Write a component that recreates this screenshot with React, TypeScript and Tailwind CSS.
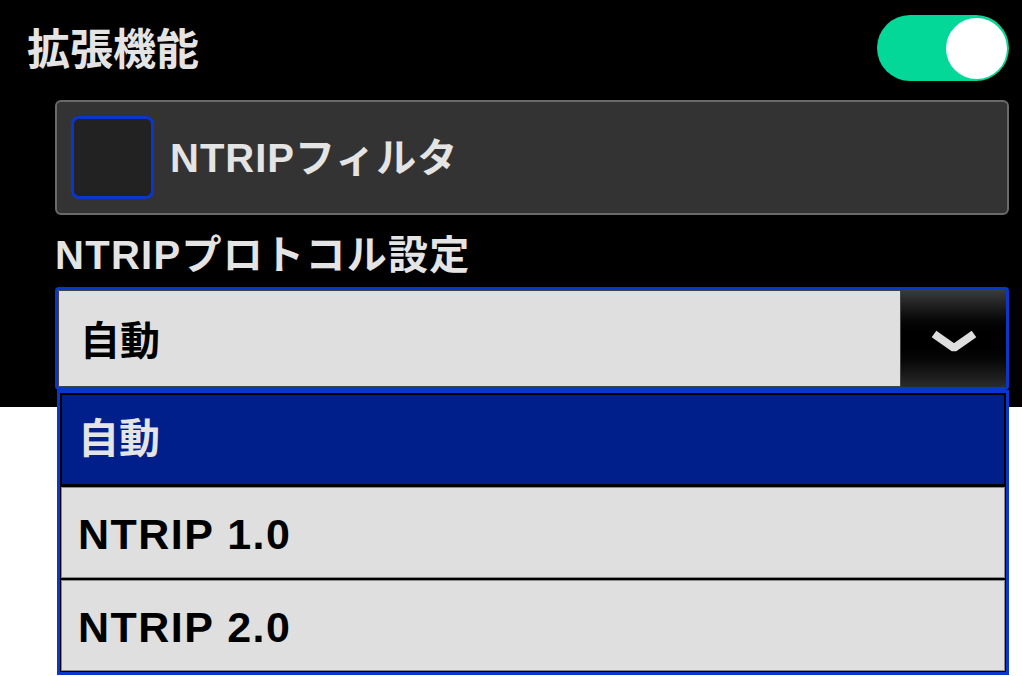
import React, { useState } from "react";

const options = ["自動", "NTRIP 1.0", "NTRIP 2.0"];

const Toggle = ({ on }: { on: boolean }) => (
  <div
    className={`w-[132px] h-[66px] rounded-full flex items-center px-[2px] ${
      on ? "bg-[#03d898] justify-end" : "bg-[#555] justify-start"
    }`}
  >
    <div className="w-[61px] h-[61px] rounded-full bg-white" />
  </div>
);

const Chevron = () => (
  <svg width="48" height="30" viewBox="0 0 48 30">
    <polyline
      points="4,7 24,21 44,7"
      fill="none"
      stroke="#dedede"
      strokeWidth="8"
      strokeLinejoin="bevel"
    />
  </svg>
);

export default function App() {
  const [selected] = useState(0);

  return (
    <div className="relative w-[1022px] h-[676px] bg-white overflow-hidden font-['Liberation_Sans','Noto_Sans_CJK_JP',sans-serif] font-bold">
      <div className="bg-black h-[407px] pl-[27px] pr-[13px] pt-[15px]">
        {/* header */}
        <div className="flex items-center justify-between h-[66px]">
          <span className="text-[43px] leading-none text-[#e4e4e4] mt-[4px]">
            拡張機能
          </span>
          <Toggle on />
        </div>

        <div className="ml-[28px]">
          {/* filter checkbox */}
          <div className="mt-[19px] h-[115px] rounded-[6px] border-2 border-[#6a6a6a] bg-[#333333] flex items-center pl-[14px] gap-[16px]">
            <div className="w-[83px] h-[83px] rounded-[8px] border-[3px] border-[#0a36d0] bg-[#222222]" />
            <span className="text-[40px] tracking-[1px] text-[#e4e4e4]">
              NTRIPフィルタ
            </span>
          </div>

          {/* protocol label */}
          <div className="h-[72px] flex items-center pt-[8px]">
            <span className="text-[40px] tracking-[1.3px] text-[#e4e4e4] leading-none">
              NTRIPプロトコル設定
            </span>
          </div>

          {/* select */}
          <div className="h-[103px] rounded-[4px] border-[3px] border-[#0a36d0] flex overflow-hidden">
            <div className="flex-1 bg-[#dfdfdf] border border-[#444] flex items-center pl-[21px] pt-[4px]">
              <span className="text-[40px] text-black">
                {options[selected]}
              </span>
            </div>
            <div className="w-[105px] bg-linear-to-b from-[#3c3c3c] via-black via-50% to-[#2c2c2c] flex items-center justify-center pt-[6px]">
              <Chevron />
            </div>
          </div>
        </div>
      </div>

      {/* open dropdown list */}
      <ul className="absolute left-[57px] top-[390px] w-[952px] border-[3px] border-[#0a36d0] bg-[#0a36d0]">
        {options.map((opt, i) => (
          <li
            key={opt}
            className={`h-[93px] border border-black flex items-center pl-[17px] ${
              i === selected
                ? "bg-[#001f8a] text-[#e4e4e4] text-[41px] shadow-[inset_0_0_0_1px_#000]"
                : "bg-[#dfdfdf] text-black text-[43px] tracking-[1.5px] pt-[4px] shadow-[inset_0_0_0_1px_#8a8a8a]"
            }`}
          >
            {opt}
          </li>
        ))}
      </ul>
    </div>
  );
}
